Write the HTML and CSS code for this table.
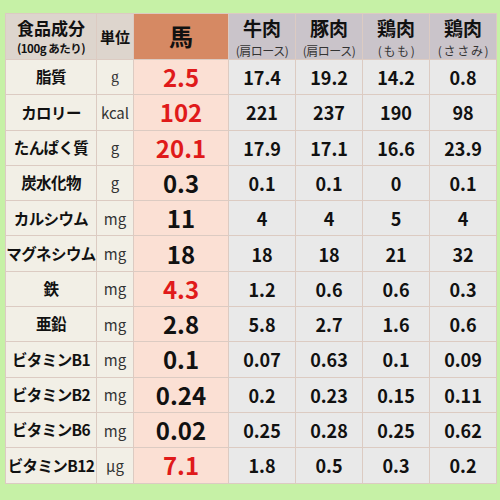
FILE: index.html
```html
<!DOCTYPE html>
<html lang="ja">
<head>
  <meta charset="UTF-8" />
  <title>馬肉の栄養成分</title>
  <link rel="stylesheet" href="styles.css">
</head>
<body>
  <table class="nutri">
    <thead>
      <tr>
        <th class="h-name"><span class="main">食品成分</span><span class="sub">(100g あたり)</span></th>
        <th class="h-unit">単位</th>
        <th class="h-horse">馬</th>
        <th class="h-meat"><span class="main">牛肉</span><span class="sub">(肩ロース)</span></th>
        <th class="h-meat"><span class="main">豚肉</span><span class="sub">(肩ロース)</span></th>
        <th class="h-meat"><span class="main">鶏肉</span><span class="sub">( も も )</span></th>
        <th class="h-meat"><span class="main">鶏肉</span><span class="sub">( さ さ み )</span></th>
      </tr>
    </thead>
    <tbody>
      <tr><td class="name">脂質</td><td class="unit serif">g</td><td class="horse red">2.5</td><td>17.4</td><td>19.2</td><td>14.2</td><td>0.8</td></tr>
      <tr><td class="name">カロリー</td><td class="unit">kcal</td><td class="horse red">102</td><td>221</td><td>237</td><td>190</td><td>98</td></tr>
      <tr><td class="name">たんぱく質</td><td class="unit">g</td><td class="horse red">20.1</td><td>17.9</td><td>17.1</td><td>16.6</td><td>23.9</td></tr>
      <tr><td class="name">炭水化物</td><td class="unit">g</td><td class="horse">0.3</td><td>0.1</td><td>0.1</td><td>0</td><td>0.1</td></tr>
      <tr><td class="name">カルシウム</td><td class="unit">mg</td><td class="horse">11</td><td>4</td><td>4</td><td>5</td><td>4</td></tr>
      <tr><td class="name">マグネシウム</td><td class="unit">mg</td><td class="horse">18</td><td>18</td><td>18</td><td>21</td><td>32</td></tr>
      <tr><td class="name">鉄</td><td class="unit">mg</td><td class="horse red">4.3</td><td>1.2</td><td>0.6</td><td>0.6</td><td>0.3</td></tr>
      <tr><td class="name">亜鉛</td><td class="unit">mg</td><td class="horse">2.8</td><td>5.8</td><td>2.7</td><td>1.6</td><td>0.6</td></tr>
      <tr><td class="name">ビタミンB1</td><td class="unit">mg</td><td class="horse">0.1</td><td>0.07</td><td>0.63</td><td>0.1</td><td>0.09</td></tr>
      <tr><td class="name">ビタミンB2</td><td class="unit">mg</td><td class="horse">0.24</td><td>0.2</td><td>0.23</td><td>0.15</td><td>0.11</td></tr>
      <tr><td class="name">ビタミンB6</td><td class="unit">mg</td><td class="horse">0.02</td><td>0.25</td><td>0.28</td><td>0.25</td><td>0.62</td></tr>
      <tr><td class="name">ビタミンB12</td><td class="unit">µg</td><td class="horse red">7.1</td><td>1.8</td><td>0.5</td><td>0.3</td><td>0.2</td></tr>
    </tbody>
  </table>
</body>
</html>
```

FILE: styles.css
```css
body {
  margin: 0;
  width: 500px;
  height: 500px;
  background: #c6f1a6; /* light green frame */
  font-family: "Noto Sans CJK JP", "Noto Sans", sans-serif;
  color: #111;
  padding: 13px 3px 0 5px;
  box-sizing: border-box;
}

.nutri {
  border-collapse: collapse;
  table-layout: fixed;
  width: 492px;
}

.nutri th,
.nutri td {
  border: 1px solid #dccbc2;
  text-align: center;
  padding: 0;
  line-height: 1;
}

.nutri th {
  height: 44px;
  font-weight: bold;
  font-size: 19px;
}

.nutri td {
  height: 34.3px;
  font-size: 18px;
  font-weight: bold;
  background: #e9e9e9;
}

.nutri th:nth-child(1) { width: 90px; }
.nutri th:nth-child(2) { width: 36px; }
.nutri th:nth-child(3) { width: 94px; }
.nutri th:nth-child(4),
.nutri th:nth-child(5) { width: 66px; }
.nutri th:nth-child(6) { width: 66px; }

.main {
  display: block;
  line-height: 1.45;
}

.h-name {
  background: #ddd5cd;
  font-size: 17px !important;
}

.h-unit {
  background: #ddd5cd;
  font-size: 15px !important;
}

.h-horse {
  background: #d68963;
  font-size: 24px !important;
}

.h-meat {
  background: #cac4ca;
}

.sub {
  display: block;
  font-size: 11.5px;
  line-height: 1.45;
  font-weight: normal;
  white-space: nowrap;
}

.h-name .sub {
  font-weight: bold;
  letter-spacing: -0.5px;
}

.h-meat .sub {
  font-size: 12px;
  color: #333;
  letter-spacing: -0.5px;
}

.nutri td.name {
  background: #f2efe6;
  font-size: 15.5px;
  white-space: nowrap;
  letter-spacing: -0.6px;
}

.nutri td.unit {
  background: #f2efe6;
  font-weight: normal;
  font-size: 15px;
  color: #333;
}

.nutri td.serif {
  font-family: "Liberation Serif", serif;
  font-size: 16px;
}

.nutri td.horse {
  background: #fbe0d4;
  font-size: 24px;
}

.red {
  color: #e01a1a;
}
```
